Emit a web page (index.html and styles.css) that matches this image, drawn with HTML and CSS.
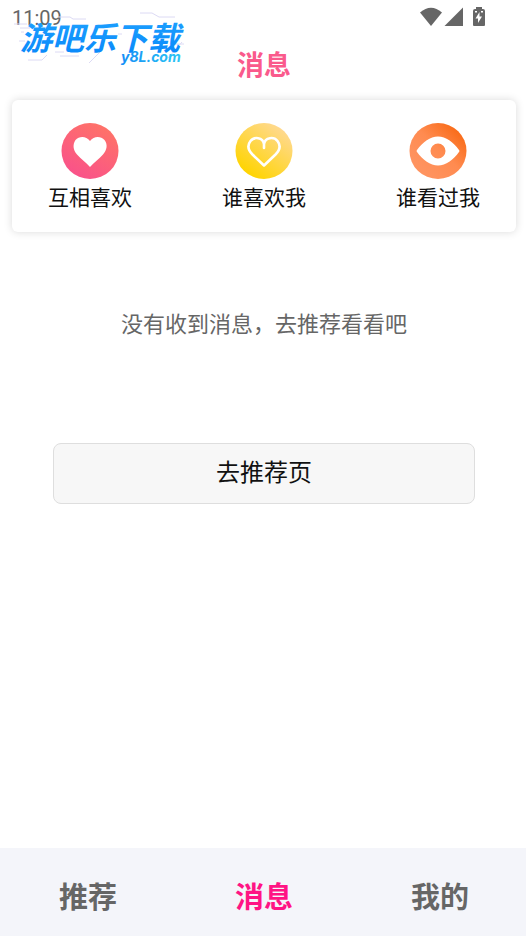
FILE: index.html
```html
<!DOCTYPE html>
<html lang="zh-CN">
<head>
<meta charset="utf-8">
<meta name="viewport" content="width=device-width, initial-scale=1">
<title>消息</title>
<link rel="stylesheet" href="styles.css">
</head>
<body>
<div class="status">
  <span class="clock">11:09</span>
  <svg class="status-icons" width="68" height="22" viewBox="0 0 68 22" fill="#666" aria-hidden="true">
    <path d="M2 6.500Q13 -3 24 6.500L13 20Z"/>
    <path d="M45 1.500V20H26.500Z"/>
    <path fill-rule="evenodd" d="M57 3H58V1H64V3H65Q67 3 67 5V19Q67 20 66 20H56Q55 20 55 19V5Q55 3 57 3ZM61.500 6L57.500 12.500H60V17L64 10.500H61.500ZM57 5V6.500H59V5ZM63 5V6.500H65V5Z"/>
  </svg>
</div>
<svg class="brand" width="176" height="60" viewBox="0 0 176 60" role="img" aria-label="游吧乐下载">
  <defs>
    <linearGradient id="blue" x1="0" y1="0" x2="0" y2="1"><stop offset="0" stop-color="#20a4ff"/><stop offset="1" stop-color="#0786fa"/></linearGradient>
    <linearGradient id="cyan"><stop offset="0" stop-color="#148df6"/><stop offset="1" stop-color="#2cc6f4"/></linearGradient>
  </defs>
  <path class="trace" d="M4 14H17M10 18H20M11 22H14M9 31H15M11 41H15M48 7H60L63 9H76M130 3H142L149 7H165M18 50H32L37 45M45 42H54M50 46H69M79 53L90 42M108 24H112M158 48L172 32M165 34H174"/>
  <text class="brand-name" x="10" y="40">游吧乐下载</text>
  <text class="brand-site" x="111" y="52">y8L.com</text>
</svg>
<header><h1>消息</h1></header>
<main>
  <section class="card">
    <a class="entry" href="#mutual">
      <svg width="58" height="56" viewBox="0 0 58 56" aria-hidden="true">
        <defs><linearGradient id="pink" x1="0.200" y1="1" x2="0.800" y2="0"><stop offset="0" stop-color="#f9508c"/><stop offset="1" stop-color="#ff7466"/></linearGradient></defs>
        <ellipse cx="29" cy="28" rx="28.500" ry="28" fill="url(#pink)"/>
        <path fill="#fff" d="M29 18C33 12.500 40 13 43.500 17C47 21.500 46 27 42 31.500C38 36 33 39.500 29 44C25 39.500 20 36 16 31.500C12 27 11.500 21.500 14.500 17C18 13 25 12.500 29 18Z"/>
      </svg>
      <span>互相喜欢</span>
    </a>
    <a class="entry" href="#likes">
      <svg width="58" height="56" viewBox="0 0 58 56" aria-hidden="true">
        <defs><linearGradient id="gold" x1="0.200" y1="0.900" x2="0.800" y2="0.100"><stop offset="0" stop-color="#ffd400"/><stop offset="1" stop-color="#ffd98e"/></linearGradient></defs>
        <ellipse cx="29" cy="28" rx="28.500" ry="28" fill="url(#gold)"/>
        <path fill="none" stroke="#fff" stroke-width="2.600" stroke-linecap="round" stroke-linejoin="round" d="M29 25V21C30 14 39 13.500 42.500 18C46 22.500 44.500 27.500 40.500 31.500L29 42.500L17.500 31.500C13.500 27.500 12 22.500 15.500 18C19 13.500 28 14 29 21"/>
      </svg>
      <span>谁喜欢我</span>
    </a>
    <a class="entry" href="#visitors">
      <svg width="58" height="56" viewBox="0 0 58 56" aria-hidden="true">
        <defs><linearGradient id="orange" x1="0.200" y1="0.800" x2="0.850" y2="0.150"><stop offset="0" stop-color="#ff935f"/><stop offset="0.500" stop-color="#ff8b50"/><stop offset="1" stop-color="#f96d1b"/></linearGradient></defs>
        <ellipse cx="29" cy="28" rx="28.500" ry="28" fill="url(#orange)"/>
        <path fill="#fff" fill-rule="evenodd" d="M8 27C14 19 21 13.500 29 13.500S44 19 50 27Q51 28 50 29C44 37 37 42.500 29 42.500S14 37 8 29Q7 28 8 27ZM29 20.500A7.500 7.500 0 1 0 29 35.500A7.500 7.500 0 1 0 29 20.500Z"/>
      </svg>
      <span>谁看过我</span>
    </a>
  </section>
  <p class="empty">没有收到消息，去推荐看看吧</p>
  <button class="go" type="button">去推荐页</button>
</main>
<nav>
  <a href="#recommend">推荐</a>
  <a class="active" href="#messages" aria-current="page">消息</a>
  <a href="#mine">我的</a>
</nav>
</body>
</html>
```
FILE: styles.css
```css
* { box-sizing: border-box; }
body {
  margin: 0;
  min-height: 100vh;
  display: flex;
  flex-direction: column;
  background: #fff;
  color: #111;
  font-family: Roboto, "Noto Sans CJK SC", sans-serif;
}
a { color: inherit; text-decoration: none; }
.status {
  display: flex;
  justify-content: space-between;
  height: 46px;
  padding: 6px 40px 0 12px;
}
.clock { font-size: 20px; line-height: 24px; color: #666; }
.status-icons { display: block; }
.brand { position: absolute; left: 10px; top: 10px; }
.trace { fill: none; stroke: #dcdaf4; stroke-width: 1; }
.brand-name {
  font: italic 700 32px "Noto Sans CJK SC", sans-serif;
  fill: url(#blue);
}
.brand-site {
  font: italic 700 14px Inter, sans-serif;
  fill: url(#cyan);
}
h1 {
  margin: 0;
  padding-left: 2px;
  text-align: center;
  font-size: 27px;
  line-height: 40px;
  font-weight: 700;
  color: #fa5a8c;
}
main { flex: 1; padding: 14px 10px 0 12px; }
.card {
  display: flex;
  justify-content: space-between;
  padding: 23px 36px 19px;
  border-radius: 6px;
  background: #fff;
  box-shadow: 0 0 8px rgba(0, 0, 0, 0.15);
}
.entry {
  display: flex;
  flex-direction: column;
  align-items: center;
  gap: 5px;
  font-size: 21px;
  line-height: 29px;
}
.entry svg { display: block; }
.empty {
  margin: 78px 0 0;
  text-align: center;
  font-size: 22px;
  line-height: 30px;
  color: #666;
}
.go {
  display: block;
  width: calc(100% - 82px);
  height: 61px;
  margin: 103px auto 0;
  padding: 0 0 6px;
  border: 1px solid #dedede;
  border-radius: 8px;
  background: #f7f7f7;
  color: #111;
  font-family: inherit;
  font-size: 24px;
}
nav {
  display: flex;
  align-items: center;
  justify-content: space-between;
  height: 88px;
  padding: 6px 57px 0 59px;
  background: #f4f5fa;
}
nav a {
  font-size: 29px;
  font-weight: 700;
  color: #666;
}
nav .active { color: #ff1484; }
```
